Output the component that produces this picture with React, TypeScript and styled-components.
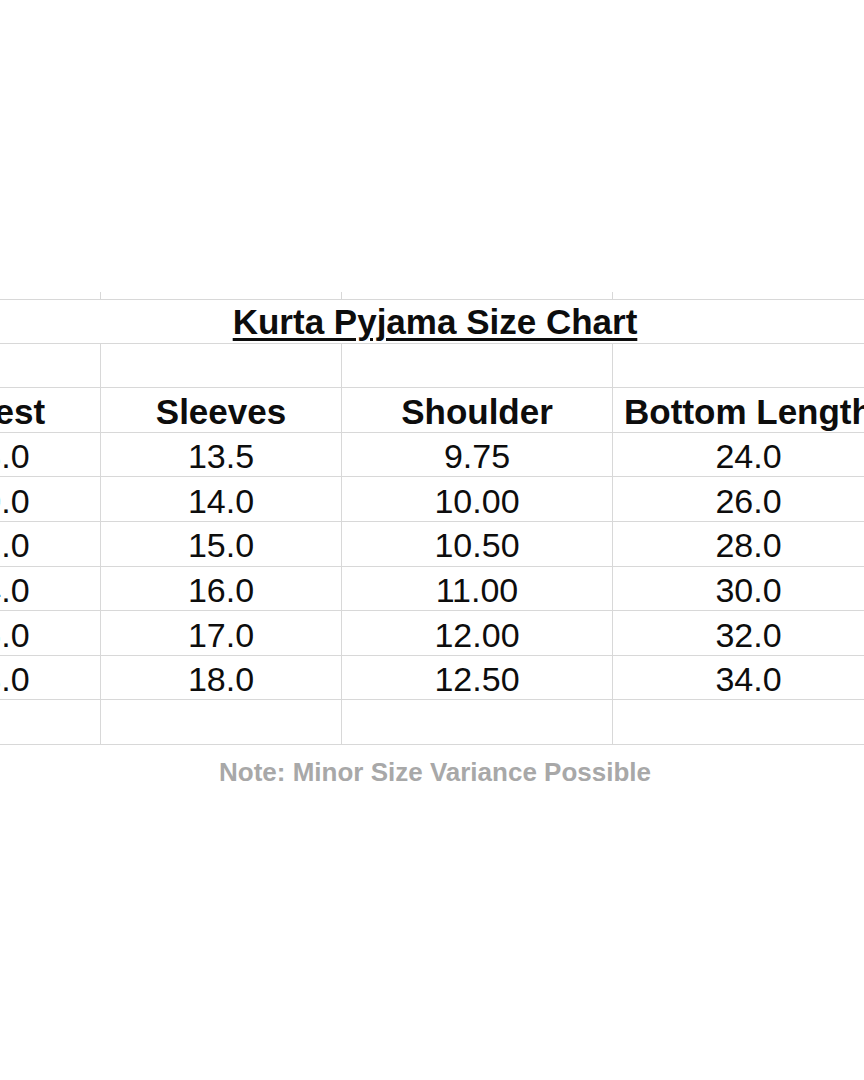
import React from 'react';
import styled, { createGlobalStyle } from 'styled-components';

const GlobalStyle = createGlobalStyle`
	html, body {
		margin: 0;
		padding: 0;
		background: #fff;
	}
	body {
		font-family: 'Liberation Sans', Arial, sans-serif;
		color: #111;
	}
`;

const Page = styled.div`
	width: 864px;
	height: 1080px;
	overflow: hidden;
	background: #fff;
	padding-top: 292px;
	box-sizing: border-box;
`;

// the sheet is wider than the picture, so it runs off both edges
const Sheet = styled.div`
	display: grid;
	grid-template-columns: 208px 241px 271px 272px 92px;
	grid-template-rows: 7px repeat(10, 44.6px);
	margin-left: -107px;
	width: 1084px;
`;

const Stub = styled.div`
	border-right: 1px solid #d8d8d8;
`;

const Cell = styled.div<{ $bold?: boolean }>`
	box-sizing: border-box;
	border-right: 1px solid #d8d8d8;
	border-bottom: 1px solid #d8d8d8;
	display: flex;
	align-items: flex-end;
	justify-content: center;
	white-space: nowrap;
	overflow: visible;
	font-size: ${(p) => (p.$bold ? '35px' : '34px')};
	font-weight: ${(p) => (p.$bold ? 700 : 400)};
	line-height: 1.15;
	color: #0d0d0d;
`;

const TitleCell = styled.div`
	grid-column: 1 / -1;
	box-sizing: border-box;
	border-top: 1px solid #d8d8d8;
	border-bottom: 1px solid #d8d8d8;
	display: flex;
	align-items: flex-end;
	justify-content: center;
	font-size: 35px;
	font-weight: 700;
	line-height: 1.15;
	color: #0d0d0d;
	text-decoration: underline;
	text-decoration-thickness: 3px;
	text-underline-offset: 4px;
`;

const Note = styled.div`
	width: 1084px;
	margin-left: -107px;
	margin-top: 12px;
	text-align: center;
	font-size: 26px;
	font-weight: 700;
	color: #a8a8a8;
	line-height: 30px;
`;

const headers = ['Chest', 'Sleeves', 'Shoulder', 'Bottom Length', ''];

const rows = [
	['38.0', '13.5', '9.75', '24.0'],
	['40.0', '14.0', '10.00', '26.0'],
	['42.0', '15.0', '10.50', '28.0'],
	['44.0', '16.0', '11.00', '30.0'],
	['46.0', '17.0', '12.00', '32.0'],
	['48.0', '18.0', '12.50', '34.0'],
];

const App: React.FC = () => {
	return (
		<Page>
			<GlobalStyle />
			<Sheet>
				{headers.map((_, i) => (
					<Stub key={'s' + i} />
				))}
				<TitleCell>Kurta Pyjama Size Chart</TitleCell>
				{headers.map((_, i) => (
					<Cell key={'e' + i} />
				))}
				{headers.map((h, i) => (
					<Cell key={'h' + i} $bold>
						{h}
					</Cell>
				))}
				{rows.map((r, ri) => (
					<React.Fragment key={ri}>
						{r.map((v, ci) => (
							<Cell key={ci}>{v}</Cell>
						))}
						<Cell />
					</React.Fragment>
				))}
				{headers.map((_, i) => (
					<Cell key={'b' + i} />
				))}
			</Sheet>
			<Note>Note: Minor Size Variance Possible</Note>
		</Page>
	);
};

export default App;
